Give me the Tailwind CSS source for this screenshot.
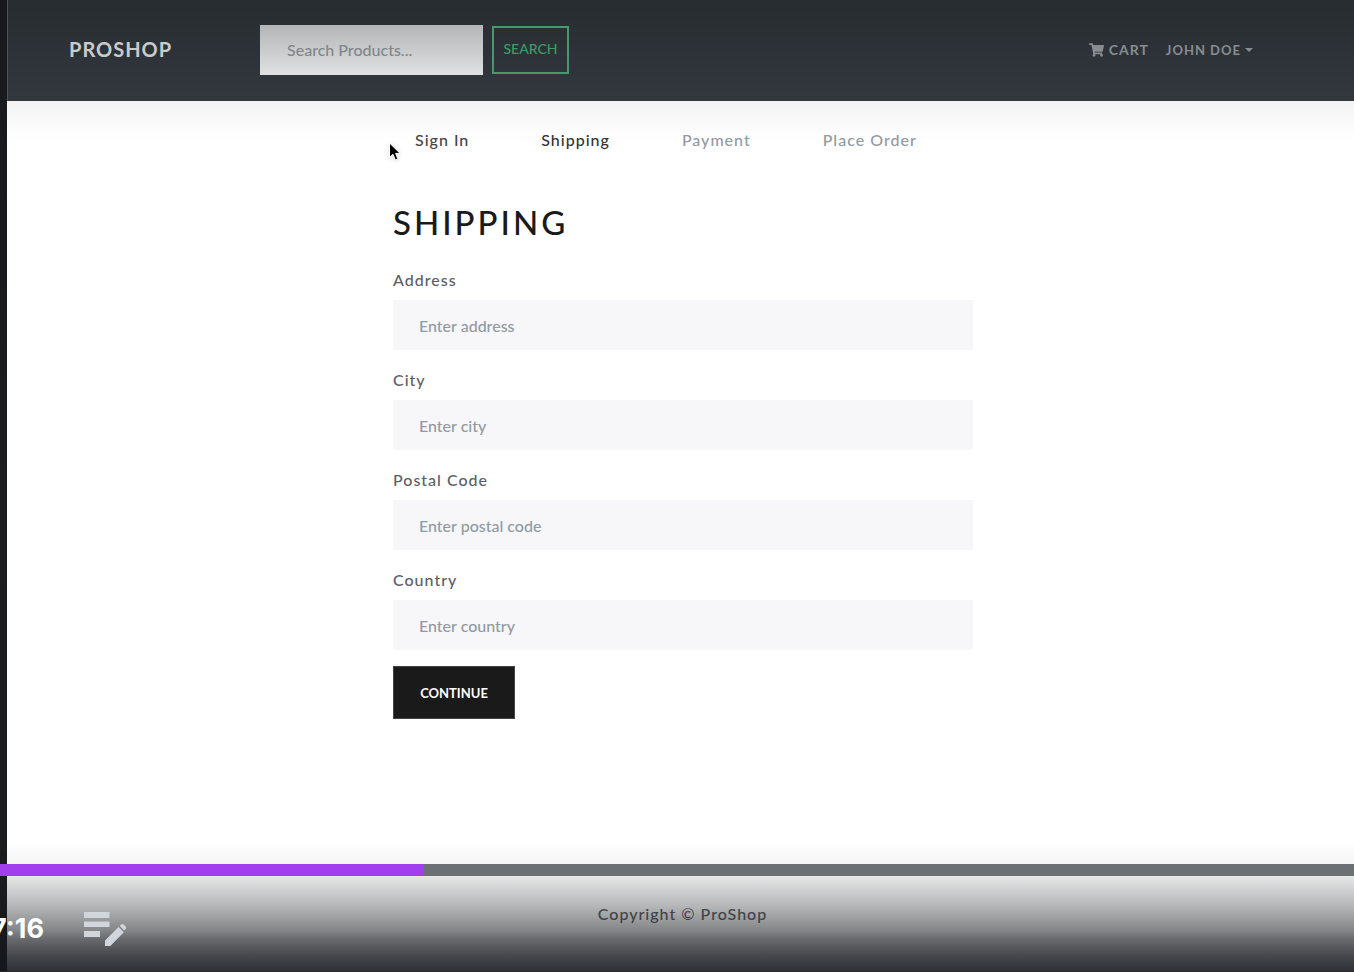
<!DOCTYPE html>
<html lang="en">
<head>
<meta charset="utf-8">
<meta name="viewport" content="width=device-width, initial-scale=1">
<title>ProShop - Shipping</title>
<script src="https://cdn.jsdelivr.net/npm/@tailwindcss/browser@4"></script>
</head>
<body class="bg-white font-[Lato,'Noto_Sans',sans-serif] text-[16px] leading-6 font-medium text-[#5c6063]">
<div class="relative flex min-h-screen overflow-hidden">
  <div class="w-[7px] shrink-0 bg-linear-to-b from-[#17191d] via-[#1c1d1f] to-[#1b1c1f]"></div>

  <div class="flex min-w-0 flex-1 flex-col">
    <header class="flex h-[101px] items-center border-l border-[#50555a] bg-linear-to-b from-[#272c2f] via-[#2d3238] to-[#33383f] pr-[101px] pb-[2px] pl-[61px]">
      <a href="#" class="w-[191px] pb-[2px] text-[20px] font-bold tracking-[1px] text-[#c9cacc]">PROSHOP</a>
      <form class="flex items-center gap-[9px]">
        <input type="search" aria-label="Search products" placeholder="Search Products..." class="h-[50px] w-[223px] bg-linear-to-b from-[#b4b5b7] to-[#e0e1e3] px-[27px] text-[16px] outline-none placeholder:text-[#7f868c]">
        <button type="button" class="h-12 w-[77px] border-2 border-[#45996a] pb-[2px] text-[14px] text-[#3b9d66]">SEARCH</button>
      </form>
      <nav class="ml-auto flex items-center gap-[17px] text-[14px] font-bold text-[#898c90]">
        <a href="#" class="flex items-center gap-[5px] tracking-[1px]"><svg class="h-[14px] w-[15px]" viewBox="0 0 576 512" fill="currentColor" aria-hidden="true"><path d="M528.12 301.319l47.273-208C578.806 78.301 567.391 64 551.99 64H159.208l-9.166-44.81C147.758 8.021 137.93 0 126.529 0H24C10.745 0 0 10.745 0 24v16c0 13.255 10.745 24 24 24h69.883l70.248 343.435C147.325 417.1 136 435.222 136 456c0 30.928 25.072 56 56 56s56-25.072 56-56c0-15.674-6.447-29.835-16.824-40h209.647C430.447 426.165 424 440.326 424 456c0 30.928 25.072 56 56 56s56-25.072 56-56c0-22.172-12.888-41.332-31.579-50.405l5.517-24.276c3.413-15.018-8.002-29.319-23.403-29.319H218.117l-6.545-32h293.145c11.206 0 20.92-7.754 23.403-18.681z"/></svg>CART</a>
        <button type="button" class="flex items-center gap-1 text-[13px] font-bold tracking-[1px]">JOHN DOE<svg class="h-1 w-2" viewBox="0 0 8 4" fill="currentColor" aria-hidden="true"><path d="M0 0h8L4 4z"/></svg></button>
      </nav>
    </header>

    <main class="flex-1 bg-linear-to-b from-[#f3f3f3] via-white via-[40px] to-white pl-[5px]">
      <div class="mx-auto w-full max-w-[580px] pt-[27px]">
        <nav aria-label="Checkout steps" class="flex gap-[72px] pl-[22px] tracking-[1px] text-[#919aa1]">
          <a href="#" class="text-[#444444]">Sign In</a>
          <a href="#" class="text-[#333333]">Shipping</a>
          <span>Payment</span>
          <span>Place Order</span>
        </nav>
        <h1 class="mt-[50px] text-[33px] leading-10 font-medium tracking-[3px] text-[#1a1a1a]">SHIPPING</h1>
        <form class="mt-[26px]">
          <div class="flex flex-col gap-[18px]">
            <div><label for="address" class="mb-2 block tracking-[1px]">Address</label><input id="address" type="text" placeholder="Enter address" class="block h-[50px] w-full bg-[#f7f7f9] px-[26px] outline-none placeholder:text-[#919aa1]"></div>
            <div><label for="city" class="mb-2 block tracking-[1px]">City</label><input id="city" type="text" placeholder="Enter city" class="block h-[50px] w-full bg-[#f7f7f9] px-[26px] outline-none placeholder:text-[#919aa1]"></div>
            <div><label for="postal" class="mb-2 block tracking-[1px]">Postal Code</label><input id="postal" type="text" placeholder="Enter postal code" class="block h-[50px] w-full bg-[#f7f7f9] px-[26px] outline-none placeholder:text-[#919aa1]"></div>
            <div><label for="country" class="mb-2 block tracking-[1px]">Country</label><input id="country" type="text" placeholder="Enter country" class="block h-[50px] w-full bg-[#f7f7f9] px-[26px] outline-none placeholder:text-[#919aa1]"></div>
          </div>
          <button type="button" class="mt-4 h-[53px] w-[122px] border border-[#444444] bg-[#1a1a1a] text-[13px] font-bold text-white">CONTINUE</button>
        </form>
      </div>
    </main>

    <footer class="pt-6 pb-[46px] pl-1 text-center tracking-[1px]">Copyright © ProShop</footer>
  </div>

  <!-- Mouse pointer -->
  <svg class="absolute top-[142px] left-[388px] h-5 w-[14px] drop-shadow-sm" viewBox="0 0 14 20" aria-hidden="true"><path d="M1.500 1v14.500l3.500-3.200 2.300 5.700 2.600-1.100-2.300-5.500h4.600z" fill="#000" stroke="#fff" stroke-width="1"/></svg>

  <!-- Video player controls -->
  <div class="absolute inset-x-0 bottom-0">
    <div class="h-6 bg-linear-to-b from-black/0 to-black/4"></div>
    <div class="h-3 bg-[#6a7073]" role="progressbar" aria-label="Playback" aria-valuenow="31" aria-valuemin="0" aria-valuemax="100"><div class="h-full bg-[#a13fee]" style="width:31.3%"></div></div>
    <div class="flex h-24 items-center gap-[40px] border-b border-[#33262f] bg-[linear-gradient(to_bottom,rgba(20,23,28,0.1),rgba(20,23,28,0.32)_31px,rgba(20,23,28,0.52)_54px,rgba(20,23,28,0.65)_64px,rgba(20,23,28,0.8)_81px,rgba(20,23,28,0.89))] pt-[10px]">
      <div class="flex w-[44px] justify-end overflow-hidden font-[Inter,sans-serif] text-[27px] leading-8 font-bold text-white">7:16</div>
      <button type="button" aria-label="Notes"><svg class="block h-[34px] w-[42px]" viewBox="0 0 42 34" fill="#d1d6dc" aria-hidden="true"><path d="M0 0h25.500v6H0zM0 9.500h25.500v5.500H0zM0 19h16v6H0zM21 28.500L34.500 15l5.300 5.300L26.300 34H21zM35.800 13.700l1.200-1.200q1.300-1.200 2.600 0l2 2q1.200 1.300 0 2.600l-1.400 1.400z"/></svg></button>
    </div>
  </div>
</div>
</body>
</html>
